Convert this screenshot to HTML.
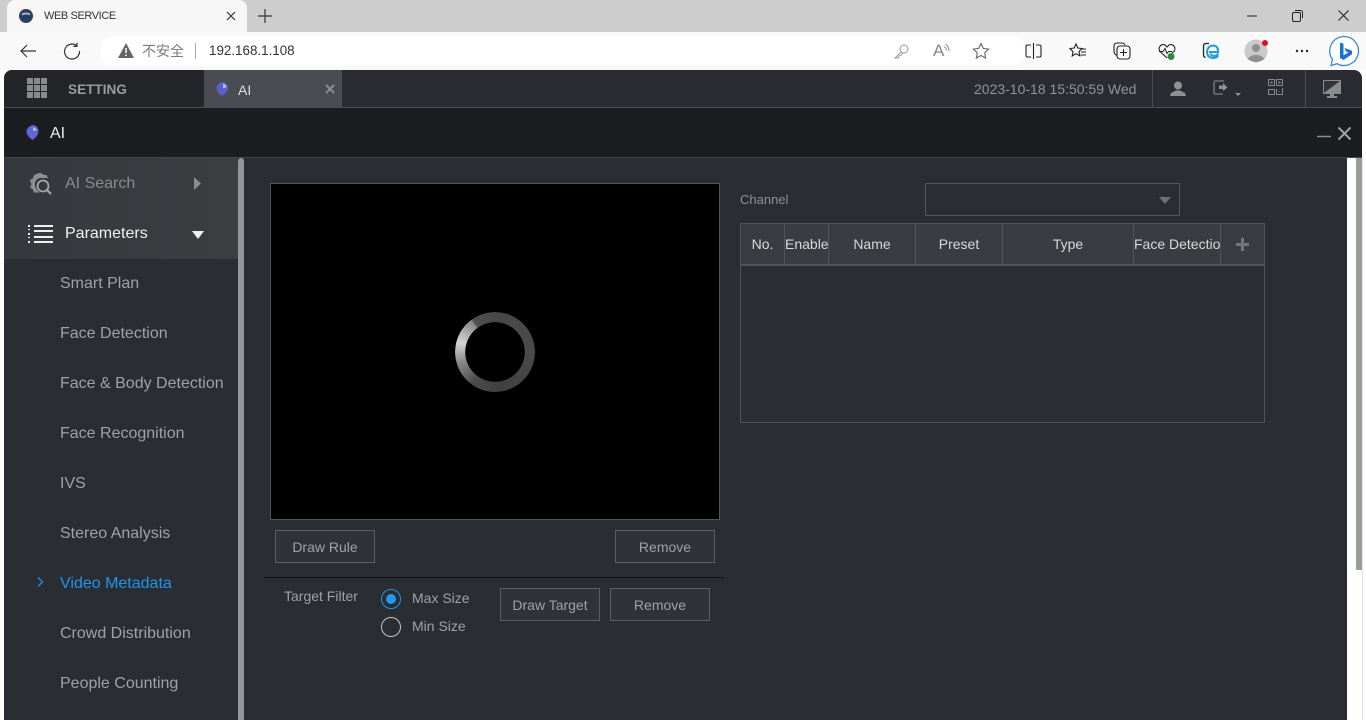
<!DOCTYPE html>
<html lang="zh">
<head>
<meta charset="utf-8">
<title>WEB SERVICE</title>
<style>
html,body{margin:0;padding:0;width:1366px;height:720px;overflow:hidden;background:#fff}
body{position:relative;font-family:"Liberation Sans","Noto Sans CJK SC",sans-serif}
.a{position:absolute}
.t{position:absolute;white-space:nowrap;line-height:20px}
.m{position:absolute;left:60px;font-size:16px;color:#a0a2a4;white-space:nowrap;line-height:20px}
.btn{position:absolute;box-sizing:border-box;width:100px;height:33px;border:1px solid #5b5e62;background:#2f3237;color:#a0a2a4;font-size:14px;text-align:center;line-height:32px}
.th{position:absolute;top:224px;height:41px;line-height:40px;text-align:center;font-size:14px;color:#d8d9da;border-right:1px solid #505357;box-sizing:border-box;white-space:nowrap;overflow:hidden}
svg{position:absolute;overflow:visible}
</style>
</head>
<body>
<!-- browser chrome -->
<div class="a" style="left:0;top:0;width:1366px;height:32px;background:#cdcdcd"></div>
<div class="a" style="left:7px;top:0;width:240px;height:32px;background:#f7f7f7;border-top-left-radius:8px;border-top-right-radius:8px"></div>
<div class="a" style="left:0;top:32px;width:1366px;height:38px;background:#f9f9f9"></div>
<div class="a" style="left:100px;top:36px;width:926px;height:30px;background:#fff;border-radius:15px"></div>
<svg style="left:19px;top:8px" width="16" height="16"><circle cx="7" cy="8" r="7" fill="#3a3c55"/><circle cx="7" cy="8" r="4.5" fill="#1d3f70"/><path d="M3 6.500q4-2 8 0" fill="none" stroke="#9fb0c8" stroke-width="2"/></svg>
<div class="t" style="left:44px;top:6px;font-size:11px;letter-spacing:-.4px;color:#333">WEB SERVICE</div>
<svg style="left:226px;top:11px" width="10" height="10"><path d="M1 1l8 8M9 1l-8 8" stroke="#333" stroke-width="1.2"/></svg>
<svg style="left:257px;top:8px" width="16" height="16"><path d="M8 1v14M1 8h14" stroke="#333" stroke-width="1.2"/></svg>
<svg style="left:1247px;top:15px" width="10" height="2"><path d="M0 1h10" stroke="#222" stroke-width="1"/></svg>
<svg style="left:1292px;top:10px" width="11" height="12"><rect x=".5" y="2.5" width="8" height="9" rx="1.5" fill="none" stroke="#222"/><path d="M3 .5h5.5a2 2 0 0 1 2 2V8" fill="none" stroke="#222"/></svg>
<svg style="left:1338px;top:10px" width="11" height="11"><path d="M.5.5l10 10M10.500.5l-10 10" stroke="#222" stroke-width="1.1"/></svg>
<svg style="left:19px;top:42px" width="18" height="18"><path d="M17 9H2M8 3L2 9l6 6" fill="none" stroke="#333" stroke-width="1.200"/></svg>
<svg style="left:63px;top:42px" width="18" height="18"><path d="M13.500 3.500A7.500 7.500 0 1 0 16.500 9M14 .8v3.600h-3.600" fill="none" stroke="#333" stroke-width="1.200"/></svg>
<svg style="left:118px;top:43px" width="16" height="15"><path d="M8 0l8 15H0z" fill="#666"/><path d="M8 5v5M8 11.500v1.500" stroke="#fff" stroke-width="1.500"/></svg>
<div class="t" style="left:142px;top:41px;font-size:14px;color:#7a7a7a">不安全</div>
<div class="a" style="left:195px;top:43px;width:1px;height:16px;background:#aaa"></div>
<div class="t" style="left:209px;top:41px;font-size:13.4px;color:#333">192.168.1.108</div>
<!-- toolbar icons -->
<svg style="left:894px;top:44px" width="15" height="15"><circle cx="10" cy="5" r="4" fill="none" stroke="#999"/><path d="M7 8l-6 6h3l1-2 2-1 2-2" fill="none" stroke="#999"/></svg>
<div class="t" style="left:933px;top:41px;font-size:17px;color:#888">A</div>
<svg style="left:944px;top:44px" width="6" height="8"><path d="M1.500 0q3.500 2.500 3.500 7M0 2.500q2.500 1.500 2.500 4" fill="none" stroke="#888"/></svg>
<svg style="left:972px;top:42px" width="18" height="18"><path d="M9 1.500l2.300 4.900 5.300.7-3.900 3.700 1 5.300L9 13.500l-4.700 2.600 1-5.300L1.400 7.100l5.300-.7z" fill="none" stroke="#666" stroke-width="1.100"/></svg>
<svg style="left:1025px;top:43px" width="17" height="16"><path d="M6 2H2.500A1.500 1.500 0 0 0 1 3.500v9A1.500 1.500 0 0 0 2.500 14H6M11 2h3.500A1.500 1.500 0 0 1 16 3.500v9a1.500 1.500 0 0 1-1.500 1.500H11M8.500 0v16" fill="none" stroke="#222" stroke-width="1.100"/></svg>
<svg style="left:1069px;top:43px" width="18" height="17"><path d="M7 1l1.800 4 4.200.5-3 3 .8 4.300L7 10.700 3.200 13 4 8.700 1 5.500 5.200 5z" fill="none" stroke="#222" stroke-width="1.100"/><path d="M12 6h5M12 9h5M11.500 12h5.500" stroke="#222"/></svg>
<svg style="left:1113px;top:42px" width="18" height="18"><path d="M4 13.500Q1 12 1 9V4q0-2.500 2.500-3H9q2 0 3 2" fill="none" stroke="#222" stroke-width="1.100"/><rect x="4" y="4" width="13" height="13" rx="3" fill="#f9f9f9" stroke="#222" stroke-width="1.100"/><path d="M10.500 7v7M7 10.500h7" stroke="#222" stroke-width="1.100"/></svg>
<svg style="left:1158px;top:43px" width="18" height="18"><path d="M9 15L2 8.500Q.5 6.500 1.500 4 3.500.5 7 2l2 2 2-2q3.500-1.500 5.500 2 1 2.500-.5 4.500L14 10" fill="none" stroke="#222" stroke-width="1.100"/><path d="M1 8.500h4l2-3 2 5 1.500-2H14" fill="none" stroke="#222"/><circle cx="13" cy="13.500" r="3.500" fill="#2d8a3e"/></svg>
<svg style="left:1202px;top:42px" width="17" height="18"><path d="M7 1.500H4Q1.500 1.500 1.500 4v9q0 2 2 2.500" fill="none" stroke="#222" stroke-width="1.300"/><path d="M7 10h9q.5-6-4.500-6.500Q6 3.500 5 9.500q0 6 6 6.500 3 0 4.500-1.500v-2q-2 1.500-4 1.500-2.500-.5-3-2.500" fill="none" stroke="#1f9fd8" stroke-width="2"/></svg>
<svg style="left:1244px;top:39px" width="26" height="24"><circle cx="12" cy="12" r="11.500" fill="#c9c9c9"/><circle cx="12" cy="9" r="4" fill="#8f8f8f"/><path d="M3.500 19.500q8.500-7.500 17 0q-8.500 7-17 0z" fill="#8f8f8f"/><circle cx="21" cy="4" r="3" fill="#d8112a"/></svg>
<svg style="left:1295px;top:49px" width="14" height="4"><circle cx="2" cy="2" r="1.200" fill="#222"/><circle cx="7" cy="2" r="1.200" fill="#222"/><circle cx="12" cy="2" r="1.200" fill="#222"/></svg>
<svg style="left:1328px;top:35px" width="32" height="33"><path d="M16 1.500a14.500 14.500 0 1 1-7 27.200L3 30.500l1.500-6A14.500 14.500 0 0 1 16 1.500z" fill="#fff" stroke="#3b8bd6" stroke-width="1.300"/><path d="M12 7.500l3.500 1.300v11.500l5-2.800-2.800-1.300-1.200-3.200 7.500 2.700v3.600L15.500 25l-3.500-2z" fill="#1a73d2"/></svg>

<!-- app -->
<div class="a" style="left:4px;top:70px;width:1358px;height:38px;background:#2a2c31;border-radius:8px 8px 0 0"></div>
<div class="a" style="left:4px;top:70px;width:200px;height:37px;background:#232529;border-top-left-radius:8px"></div>
<div class="a" style="left:204px;top:70px;width:138px;height:37px;background:#494c50"></div>
<div class="a" style="left:4px;top:107px;width:1358px;height:1px;background:#4b4d51"></div>
<svg style="left:27px;top:78px" width="20" height="20" fill="#8a8b8d"><rect width="6" height="6"/><rect x="7" width="6" height="6"/><rect x="14" width="6" height="6"/><rect y="7" width="6" height="6"/><rect x="7" y="7" width="6" height="6"/><rect x="14" y="7" width="6" height="6"/><rect y="14" width="6" height="6"/><rect x="7" y="14" width="6" height="6"/><rect x="14" y="14" width="6" height="6"/></svg>
<div class="t" style="left:68px;top:80px;font-size:13.6px;font-weight:bold;color:#9a9b9d">SETTING</div>
<svg style="left:215px;top:82px" width="14" height="15"><path d="M7.500 0Q13 1 13 6q0 5-6 7.500Q1.500 11 1.500 6 2 1 7.500 0z" fill="#5a5fd0"/><path d="M8 1.500q3.500 1 3.500 4L8 6z" fill="#b9c2d8"/></svg>
<div class="t" style="left:238px;top:80px;font-size:14px;color:#dfe0e1">AI</div>
<svg style="left:325px;top:84px" width="10" height="10"><path d="M1 1l8 8M9 1l-8 8" stroke="#8c8e90" stroke-width="2"/></svg>
<div class="t" style="left:974px;top:79px;font-size:14px;color:#929497">2023-10-18 15:50:59 Wed</div>
<div class="a" style="left:1152px;top:70px;width:1px;height:37px;background:#4b4d51"></div>
<div class="a" style="left:1305px;top:70px;width:1px;height:37px;background:#4b4d51"></div>
<svg style="left:1170px;top:81px" width="16" height="15" fill="#909294"><circle cx="8" cy="4.500" r="4"/><path d="M0 15l1-3 5-2.500h4l5 2.500 1 3z"/></svg>
<svg style="left:1213px;top:80px" width="30" height="17"><path d="M11 1H2.500Q1 1 1 2.500v10Q1 14 2.500 14H10" fill="none" stroke="#7d7f82" stroke-width="1.300"/><path d="M6 5.500h4V3l4.500 4.500L10 11V9H6z" fill="#909294"/><path d="M22 13h6l-3 3z" fill="#909294"/></svg>
<svg style="left:1268px;top:79px" width="15" height="16"><g fill="none" stroke="#85878a"><rect x=".5" y=".5" width="6" height="6"/><rect x="8.500" y=".5" width="6" height="6"/><rect x=".5" y="10.500" width="6" height="5"/><path d="M8.500 10v5.500h6V9M11 12.500h1"/></g><rect x="2.500" y="2.500" width="2" height="2" fill="#85878a"/><rect x="10.500" y="2.500" width="2" height="2" fill="#85878a"/></svg>
<svg style="left:1323px;top:80px" width="18" height="18"><rect x=".5" y=".5" width="17" height="13" fill="#33353a" stroke="#8a8c8e"/><path d="M1 13L17 1v12z" fill="#8a8c8e"/><path d="M7 14h4v2h3v2H4v-2h3z" fill="#8a8c8e"/></svg>

<div class="a" style="left:4px;top:108px;width:1358px;height:49px;background:#1b1d20"></div>
<div class="a" style="left:4px;top:157px;width:1358px;height:1px;background:#45474b"></div>
<svg style="left:26px;top:125px" width="13" height="16"><path d="M7 0q5.500 1 5.500 6T6.500 15Q.5 11 .5 6.500 1 1.500 7 0z" fill="#5e67d8"/><path d="M7.500 2q3 1 3 3.500L7 6z" fill="#b8c1dc"/></svg>
<div class="t" style="left:50px;top:124px;font-size:16px;color:#eceded">AI</div>
<svg style="left:1317px;top:127px" width="36" height="13"><path d="M0 9.500h14" stroke="#8d8f91" stroke-width="1.500"/><path d="M21.500.5l12 12M33.500.5l-12 12" stroke="#a0a2a4" stroke-width="2"/></svg>

<!-- content -->
<div class="a" style="left:4px;top:158px;width:1343px;height:562px;background:#2a2d32"></div>
<div class="a" style="left:1356px;top:158px;width:6px;height:412px;background:#9a9c9e"></div>
<div class="a" style="left:1362px;top:158px;width:1px;height:562px;background:#e6e6e6"></div>

<!-- sidebar -->
<div class="a" style="left:4px;top:158px;width:234px;height:101px;background:linear-gradient(90deg,#35383c,#3b3e41)"></div>
<div class="a" style="left:238px;top:158px;width:6px;height:562px;background:#94979a;border-top-left-radius:3px;border-top-right-radius:3px"></div>
<svg style="left:29px;top:172px" width="26" height="24"><path d="M10 1q3 0 5 2h2.500l1.500 3H10.500Q5 8 6 14q1 4 5 6.500H5l-1-3-3-2 1.500-3L1 8l3-1.500L5 3z" fill="#8e9092"/><circle cx="14" cy="14" r="5.500" fill="none" stroke="#a6a8aa" stroke-width="1.800"/><path d="M18 18l4 4" stroke="#a6a8aa" stroke-width="2"/></svg>
<div class="t" style="left:65px;top:174px;font-size:16px;color:#898b8e;margin-top:-2px;line-height:24px">AI Search</div>
<svg style="left:193px;top:177px" width="8" height="13"><path d="M1 0l7 6.500L1 13z" fill="#8a8c8f"/></svg>
<svg style="left:28px;top:225px" width="26" height="18" fill="#f0f0f0"><rect y="0" width="2" height="2"/><rect y="8" width="2" height="2"/><rect y="16" width="2" height="2"/><rect y="4" width="2" height="1"/><rect y="12" width="2" height="1"/><rect x="6" y="0" width="19" height="2"/><rect x="6" y="5" width="19" height="2"/><rect x="6" y="11" width="19" height="2"/><rect x="6" y="16" width="19" height="2"/></svg>
<div class="t" style="left:65px;top:224px;font-size:16px;color:#f0f1f1;margin-top:-2px;line-height:24px">Parameters</div>
<svg style="left:192px;top:231px" width="12" height="8"><path d="M0 0h12L6 8z" fill="#f0f0f0"/></svg>
<div class="m" style="top:274px">Smart Plan</div>
<div class="m" style="top:324px">Face Detection</div>
<div class="m" style="top:374px">Face &amp; Body Detection</div>
<div class="m" style="top:424px">Face Recognition</div>
<div class="m" style="top:474px">IVS</div>
<div class="m" style="top:524px">Stereo Analysis</div>
<svg style="left:37px;top:577px" width="7" height="10"><path d="M1 .5L5.500 5 1 9.500" fill="none" stroke="#1e90e0" stroke-width="1.300"/></svg>
<div class="m" style="top:574px;color:#1f94ef">Video Metadata</div>
<div class="m" style="top:624px">Crowd Distribution</div>
<div class="m" style="top:674px">People Counting</div>

<!-- video -->
<div class="a" style="left:270px;top:183px;width:448px;height:335px;background:#000;border:1px solid #54575a"></div>
<div class="a" style="left:455px;top:312px;width:80px;height:80px;border-radius:50%;background:conic-gradient(#484848 0deg,#4a4a4a 90deg,#404040 170deg,#4a4a4a 215deg,#8c8c8c 255deg,#d4d4d4 285deg,#8a8a8a 322deg,#505050 326deg,#484848 360deg);-webkit-mask:radial-gradient(circle,transparent 29.500px,#000 30px);mask:radial-gradient(circle,transparent 29.500px,#000 30px)"></div>
<div class="btn" style="left:275px;top:530px">Draw Rule</div>
<div class="btn" style="left:615px;top:530px">Remove</div>
<div class="a" style="left:264px;top:577px;width:460px;height:1px;background:#111316"></div>
<div class="t" style="left:284px;top:586px;font-size:14px;color:#a0a2a4">Target Filter</div>
<div class="a" style="left:381px;top:589px;width:20px;height:20px;box-sizing:border-box;border:1px solid #1f94ef;border-radius:50%"></div>
<div class="a" style="left:386px;top:594px;width:10px;height:10px;background:#1f9bf5;border-radius:50%"></div>
<div class="t" style="left:412px;top:588px;font-size:14px;color:#a0a2a4">Max Size</div>
<div class="a" style="left:381px;top:617px;width:20px;height:20px;box-sizing:border-box;border:1px solid #c5c6c7;border-radius:50%"></div>
<div class="t" style="left:412px;top:616px;font-size:14px;color:#a0a2a4">Min Size</div>
<div class="btn" style="left:500px;top:588px">Draw Target</div>
<div class="btn" style="left:610px;top:588px">Remove</div>

<!-- channel/table -->
<div class="t" style="left:740px;top:190px;font-size:13px;color:#8f9194">Channel</div>
<div class="a" style="left:925px;top:183px;width:253px;height:31px;border:1px solid #54575a"></div>
<svg style="left:1159px;top:197px" width="12" height="8"><path d="M0 0h12L6 7z" fill="#6d7074"/></svg>
<div class="a" style="left:740px;top:223px;width:523px;height:198px;border:1px solid #505357"></div>
<div class="a" style="left:741px;top:224px;width:523px;height:41px;background:#393c40"></div>
<div class="a" style="left:741px;top:264px;width:523px;height:2px;background:#4f5256"></div>
<div class="th" style="left:741px;width:44px">No.</div>
<div class="th" style="left:785px;width:44px;text-align:left">Enable</div>
<div class="th" style="left:829px;width:87px">Name</div>
<div class="th" style="left:916px;width:87px">Preset</div>
<div class="th" style="left:1003px;width:131px">Type</div>
<div class="th" style="left:1134px;width:87px;text-align:left">Face Detection</div>
<svg style="left:1236px;top:238px" width="13" height="13"><path d="M6.500 0v13M0 6.500h13" stroke="#74777a" stroke-width="3"/></svg>
</body>
</html>
